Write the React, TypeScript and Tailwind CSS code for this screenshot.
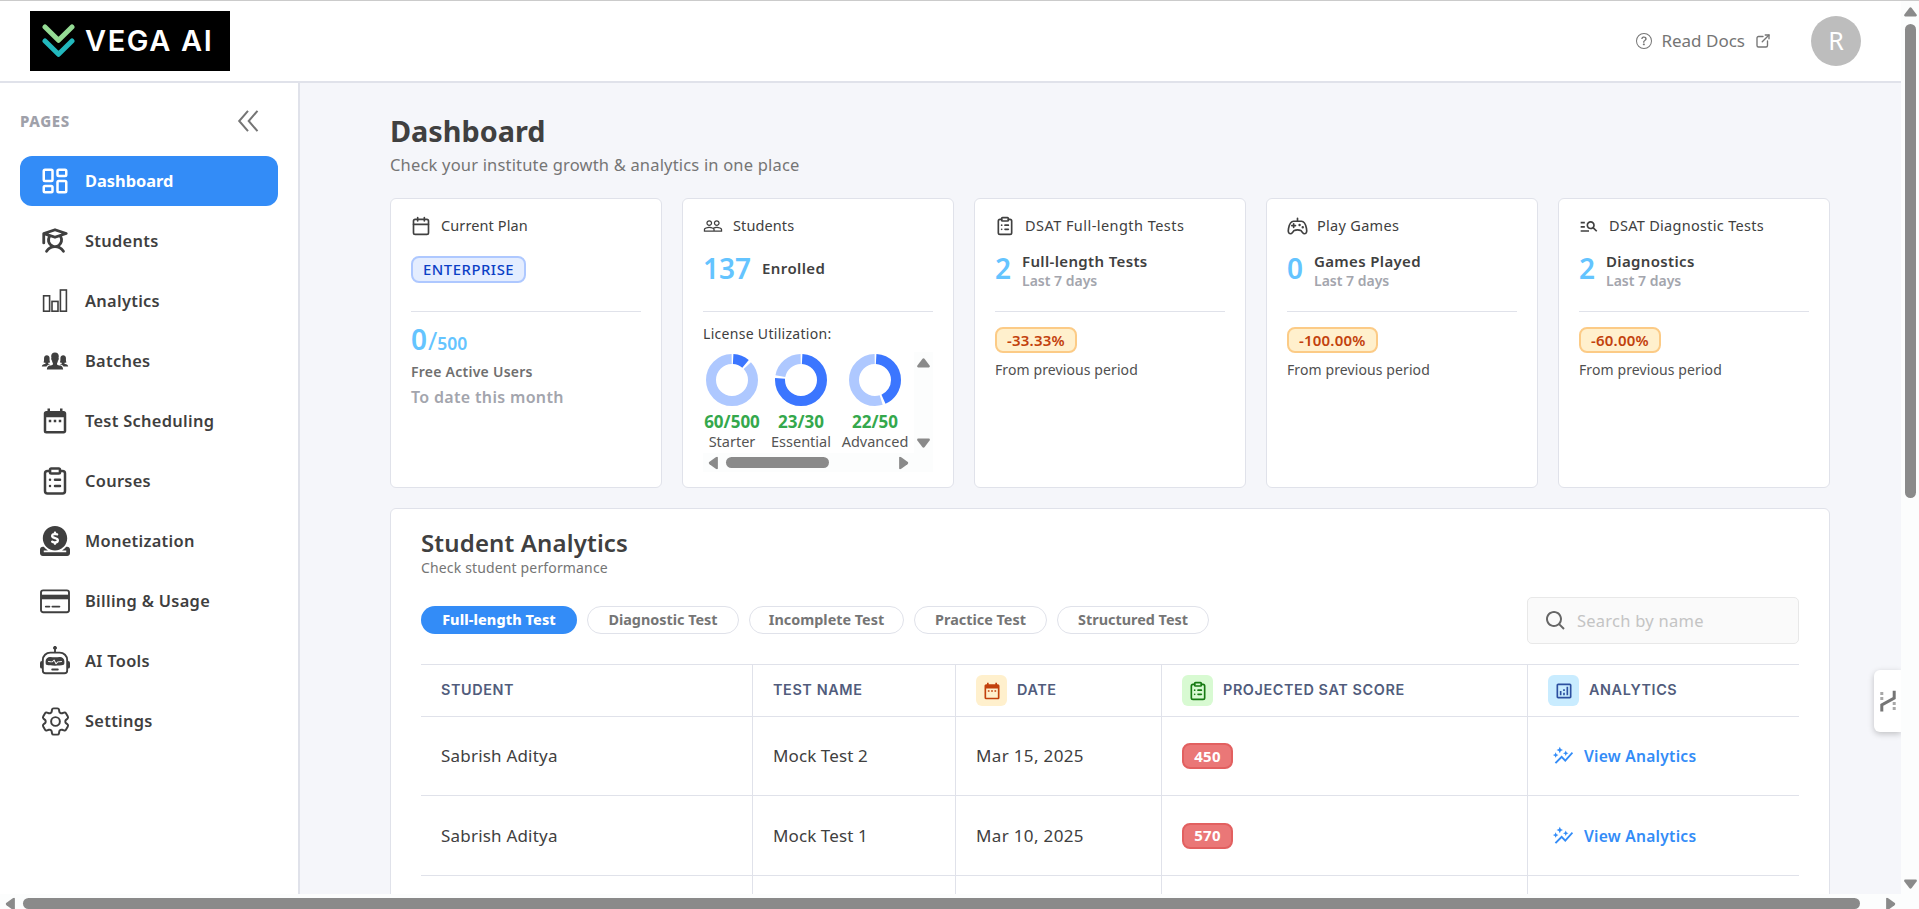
import type { ComponentType, ReactNode } from "react";
import { LuLayoutDashboard, LuClipboardList } from "react-icons/lu";
import { PiStudentBold } from "react-icons/pi";
import { IoIosPeople } from "react-icons/io";
import { FaCircleDollarToSlot } from "react-icons/fa6";
import { BsRobot, BsQuestionCircle } from "react-icons/bs";
import { MdDateRange, MdPeopleOutline, MdManageSearch, MdAutoGraph, MdOutlineAnalytics } from "react-icons/md";
import { HiOutlineCog6Tooth } from "react-icons/hi2";
import { BiSearch } from "react-icons/bi";
import { FiCalendar } from "react-icons/fi";
import { TbExternalLink } from "react-icons/tb";

type Icon = ComponentType<{ size?: number; className?: string }>;

function BarsIcon() {
  return (
    <svg width="30" height="30" viewBox="0 0 30 30" fill="none" stroke="currentColor" strokeWidth="1.6">
      <rect x="3.6" y="9.8" width="6" height="15.4" />
      <rect x="12" y="15.4" width="6" height="9.8" />
      <rect x="20.4" y="4" width="6" height="21.2" />
    </svg>
  );
}

function CardIcon() {
  return (
    <svg width="30" height="30" viewBox="0 0 30 30" fill="none" stroke="currentColor" strokeWidth="1.9">
      <rect x="1" y="4.4" width="28" height="21.8" rx="2.2" />
      <path d="M1 11 H29" strokeWidth="4.6" />
      <path d="M5.8 20.6 H9.4 M12.4 20.6 H19.4" strokeLinecap="round" />
    </svg>
  );
}

function GamepadIcon({ size = 20, className }: { size?: number; className?: string }) {
  return (
    <svg width={size} height={size} viewBox="0 0 24 24" fill="none" stroke="currentColor" strokeWidth="1.9" strokeLinecap="round" strokeLinejoin="round" className={className}>
      <path d="M7.5 6 H16.5 C19.8 6 21.2 9 22.2 14 C23 18 22.2 20.3 20.2 20.3 C18.2 20.3 17.2 17.6 15.6 16.5 C14 15.6 10 15.6 8.4 16.5 C6.8 17.6 5.8 20.3 3.8 20.3 C1.8 20.3 1 18 1.8 14 C2.8 9 4.2 6 7.5 6 Z M12 5.6 V2.6" />
      <path d="M7.6 8.9 V13.1 M5.5 11 H9.7" />
      <path d="M14.4 10.2 V10.3 M18 12.8 V12.9" strokeWidth="2.8" />
    </svg>
  );
}

function Logo() {
  return (
    <div className="flex h-[60px] w-[200px] items-center bg-black pl-3">
      <svg width="34" height="36" viewBox="0 0 34 36" fill="none" strokeWidth="5" strokeLinecap="round" strokeLinejoin="round">
        <path d="M3 18 L16.5 31.3 L30 18" stroke="#22b8bd" />
        <path d="M3 4 L16.5 17.3 L30 4" stroke="#95dc95" />
      </svg>
      <span className="ml-[9px] font-['Inter',sans-serif] text-[29px] leading-[36px] font-semibold tracking-[1.6px] whitespace-nowrap text-white">VEGA AI</span>
    </div>
  );
}

const navItems: { label: string; icon: ReactNode }[] = [
  { label: "Dashboard", icon: <LuLayoutDashboard size={30} /> },
  { label: "Students", icon: <PiStudentBold size={30} /> },
  { label: "Analytics", icon: <BarsIcon /> },
  { label: "Batches", icon: <IoIosPeople size={30} /> },
  { label: "Test Scheduling", icon: <MdDateRange size={30} /> },
  { label: "Courses", icon: <LuClipboardList size={30} /> },
  { label: "Monetization", icon: <FaCircleDollarToSlot size={30} /> },
  { label: "Billing & Usage", icon: <CardIcon /> },
  { label: "AI Tools", icon: <BsRobot size={30} /> },
  { label: "Settings", icon: <HiOutlineCog6Tooth size={35} strokeWidth={1.35} className="shrink-0" /> },
];

function Header() {
  return (
    <header className="flex h-[83px] shrink-0 items-center justify-between border-t border-b-2 border-t-[#cbcbcb] border-b-[#e0e2ea] bg-white pr-10 pl-[30px]">
      <Logo />
      <div className="flex items-center">
        <BsQuestionCircle size={16} className="text-[#757575]" />
        <span className="ml-[9px] text-[17px] leading-6 text-[#757575]">Read Docs</span>
        <TbExternalLink size={18} strokeWidth={1.8} className="ml-[9px] text-[#757575]" />
        <div className="ml-[39px] flex size-[50px] items-center justify-center rounded-full bg-[#bdbdbd] text-[25px] text-white">R</div>
      </div>
    </header>
  );
}

function Sidebar() {
  return (
    <aside className="w-[300px] shrink-0 border-r-2 border-[#e0e2ea] bg-white pl-5">
      <div className="flex h-[73px] items-center justify-between pt-[3px] pr-[39px]">
        <span className="text-[15px] leading-6 font-extrabold tracking-[0.6px] text-[#9fa1aa]">PAGES</span>
        <svg width="22" height="22" viewBox="0 0 22 22" fill="none" stroke="#757575" strokeWidth="2">
          <path d="M11 0.8 L2.2 11 L11 21.2 M20.5 0.8 L11.7 11 L20.5 21.2" />
        </svg>
      </div>
      <nav className="flex w-[258px] flex-col gap-2.5">
        {navItems.map((item, i) => (
          <div
            key={item.label}
            className={
              i === 0
                ? "flex h-[50px] items-center rounded-xl bg-[#338cf7] pl-5 font-bold text-white"
                : "flex h-[50px] items-center rounded-xl pl-5 font-semibold tracking-[0.3px] text-[#3f3f3f]"
            }
          >
            <span className="flex size-[30px] items-center justify-center">{item.icon}</span>
            <span className="ml-[15px] text-[16.4px] leading-6">{item.label}</span>
          </div>
        ))}
      </nav>
    </aside>
  );
}

function Card({ icon: Icon, size, title, tracking, children }: { icon: Icon; size: number; title: string; tracking: string; children: ReactNode }) {
  return (
    <section className="h-[290px] rounded-md border border-[#e0e2ea] bg-white px-5 pt-[15px]">
      <div className="flex h-6 items-center text-[#404040]">
        <span className="flex w-5 justify-center"><Icon size={size} className="shrink-0" /></span>
        <span className={`ml-2.5 pb-px text-[14.5px] leading-[23px] ${tracking}`}>{title}</span>
      </div>
      {children}
    </section>
  );
}

function Divider() {
  return <div className="mt-[22px] h-px bg-[#e0e2ea]" />;
}

function TrendCard({ icon, size, title, tracking, value, label, change }: { icon: Icon; size: number; title: string; tracking: string; value: string; label: string; change: string }) {
  return (
    <Card icon={icon} size={size} title={title} tracking={tracking}>
      <div className="mt-[11px] flex h-10 items-center">
        <span className="w-[27px] pb-[3px] text-[28px] leading-9 font-semibold text-[#64c4ff]">{value}</span>
        <div className="pt-[3px]">
          <div className="text-[15px] leading-[19px] font-semibold tracking-[0.35px] text-[#404040]">{label}</div>
          <div className="text-[14px] leading-[19px] font-semibold text-[#a3a5ad]">Last 7 days</div>
        </div>
      </div>
      <Divider />
      <div className="mt-[15px] flex h-[26px] w-fit items-center rounded-lg border-2 border-[#fccb86] bg-[#fff0cd] px-2.5 text-[15px] leading-5 font-semibold tracking-[0.2px] text-[#c2410c]">{change}</div>
      <div className="mt-[5px] text-[14px] leading-6 tracking-[0.1px] text-[#505050]">From previous period</div>
    </Card>
  );
}

function Donut({ used, total }: { used: number; total: number }) {
  const r = 21;
  const c = 2 * Math.PI * r;
  const gap = 2.4;
  const a = (used / total) * c;
  return (
    <svg width="52" height="52" viewBox="0 0 52 52" fill="none" strokeWidth="10">
      <g transform="rotate(-90 26 26)">
        <circle cx="26" cy="26" r={r} stroke="#3b76ff" strokeDasharray={`${a - gap} ${c - a + gap}`} strokeDashoffset={-gap / 2} />
        <circle cx="26" cy="26" r={r} stroke="#aec8ff" strokeDasharray={`${c - a - gap} ${a + gap}`} strokeDashoffset={-a - gap / 2} />
      </g>
    </svg>
  );
}

function Arrow({ className }: { className: string }) {
  return (
    <svg width="13" height="10" viewBox="0 0 13 10" className={className} fill="#8a8a8a">
      <path d="M5.3 1 Q6.5 -0.6 7.7 1 L12.6 7.6 Q13.4 9.4 11.8 9.4 L1.2 9.4 Q-0.4 9.4 0.4 7.6 Z" />
    </svg>
  );
}

const licenses = [
  { name: "Starter", used: 60, total: 500, cls: "w-[58px]" },
  { name: "Essential", used: 23, total: 30, cls: "w-[60px] ml-[10px]" },
  { name: "Advanced", used: 22, total: 50, cls: "w-[68px] ml-[10px]" },
];

function LicenseCard() {
  return (
    <Card icon={MdPeopleOutline} size={20} title="Students" tracking="tracking-[0.1px]">
      <div className="mt-[11px] flex h-10 items-center">
        <span className="pb-[3px] text-[28px] leading-9 font-semibold text-[#64c4ff]">137</span>
        <span className="ml-[11px] pb-0.5 text-[15px] leading-6 font-semibold tracking-[0.4px] text-[#404040]">Enrolled</span>
      </div>
      <Divider />
      <div className="mt-[10px] text-[14px] leading-6 tracking-[0.3px] text-[#404040]">License Utilization:</div>
      <div className="mt-1.5 h-[120px] w-[230px]">
        <div className="flex h-[101px]">
          <div className="flex w-[211px]">
            {licenses.map((l) => (
              <div key={l.name} className={`flex shrink-0 flex-col items-center pt-0.5 ${l.cls}`}>
                <Donut used={l.used} total={l.total} />
                <div className="mt-1 text-[17px] leading-6 font-bold whitespace-nowrap text-[#34a84c]">{l.used}/{l.total}</div>
                <div className="mt-[-3px] text-[14.5px] leading-5 text-[#555]">{l.name}</div>
              </div>
            ))}
          </div>
          <div className="flex w-[19px] flex-col items-center justify-between bg-[#fcfdfd] pt-1.5 pb-[5px]">
            <Arrow className="" />
            <Arrow className="rotate-180" />
          </div>
        </div>
        <div className="flex h-[19px] items-center bg-[#fcfdfd] pl-1">
          <Arrow className="-rotate-90" />
          <div className="ml-1.5 h-[11px] w-[103px] rounded-full bg-[#8a8a8a]" />
          <Arrow className="ml-[68px] rotate-90" />
        </div>
      </div>
    </Card>
  );
}

function PlanCard() {
  return (
    <Card icon={FiCalendar} size={20} title="Current Plan" tracking="tracking-[0.1px]">
      <div className="mt-[11px] flex h-10 items-center">
        <div className="flex h-[27px] items-center rounded-lg border-2 border-[#aec8ff] bg-[#e4edff] px-2.5 text-[14.8px] font-medium tracking-[0.55px] text-[#0b3fc6]">ENTERPRISE</div>
      </div>
      <Divider />
      <div className="mt-[9px] h-9 leading-9 text-[#64c4ff]">
        <span className="text-[28px] font-semibold">0</span>
        <span className="ml-px text-[25px]">/</span>
        <span className="text-[17.5px] font-semibold">500</span>
      </div>
      <div className="mt-[3px] text-[14px] leading-6 font-semibold tracking-[0.25px] text-[#6f6f6f]">Free Active Users</div>
      <div className="text-[16px] leading-[26px] font-semibold tracking-[0.33px] text-[#a3a5ad]">To date this month</div>
    </Card>
  );
}

const tabs = [
  { label: "Diagnostic Test", cls: "w-[152px]" },
  { label: "Incomplete Test", cls: "w-[155px]" },
  { label: "Practice Test", cls: "w-[133px]" },
  { label: "Structured Test", cls: "w-[152px]" },
];

const cell = "flex items-center border-r border-[#e0e2ea] pl-5 last:border-r-0";
const grid = "grid grid-cols-[332px_203px_206px_366px_1fr] border-b border-[#e0e2ea]";
const head = "font-['Inter',sans-serif] text-[14.4px] leading-5 font-semibold tracking-[0.6px] text-[#515c7c]";

function HeadCell({ icon: Icon, box, label }: { icon: Icon; box: string; label: string }) {
  return (
    <div className={cell}>
      <span className={`flex size-[31px] items-center justify-center rounded-md ${box}`}><Icon size={20} /></span>
      <span className={`ml-2.5 pb-0.5 ${head}`}>{label}</span>
    </div>
  );
}

function Row({ name, test, date, score, height }: { name: string; test: string; date: string; score: number; height: string }) {
  return (
    <div className={`${grid} ${height} text-[17px] leading-6 text-[#404040]`}>
      <div className={`${cell} tracking-[0.2px]`}>{name}</div>
      <div className={`${cell} tracking-[0.1px]`}>{test}</div>
      <div className={`${cell} tracking-[0.35px]`}>{date}</div>
      <div className={cell}>
        <span className="flex h-[26px] w-[51px] items-center justify-center rounded-lg border-2 border-[#e26060] bg-[#ea7777] pb-px text-[15px] font-bold tracking-[0.3px] text-white">{score}</span>
      </div>
      <div className={`${cell} text-[#338cf7]`}>
        <MdAutoGraph size={22} className="ml-1" />
        <span className="ml-2.5 text-[15.6px] font-semibold tracking-[0.25px]">View Analytics</span>
      </div>
    </div>
  );
}

function StudentAnalytics() {
  return (
    <section className="mt-5 h-[600px] rounded-md border border-[#e0e2ea] bg-white px-[30px] pt-[18px]">
      <h2 className="text-[24px] leading-8 font-semibold tracking-[0.15px] text-[#404040]">Student Analytics</h2>
      <p className="text-[14px] leading-[18px] tracking-[0.15px] text-[#757575]">Check student performance</p>
      <div className="mt-5 flex h-[47px] items-center justify-between">
        <div className="flex gap-2.5 pb-px text-[14.4px] leading-5">
          <div className="flex h-7 w-[156px] items-center justify-center rounded-full bg-[#338cf7] font-extrabold tracking-[0.1px] text-white">Full-length Test</div>
          {tabs.map((t) => (
            <div key={t.label} className={`flex h-7 items-center justify-center rounded-full border border-[#e0e2ea] font-bold whitespace-nowrap text-[#757575] ${t.cls}`}>{t.label}</div>
          ))}
        </div>
        <div className="flex h-[47px] w-[272px] items-center rounded-[5px] border border-[#e8e8e8] bg-[#fafafa] pl-4">
          <BiSearch size={24} className="text-[#666]" />
          <span className="ml-[9px] text-[16.5px] leading-6 tracking-[0.25px] text-[#c4c4c4]">Search by name</span>
        </div>
      </div>
      <div className="mt-5">
        <div className={`${grid} h-[53px] border-t`}>
          <div className={`${cell} pb-0.5 ${head}`}>STUDENT</div>
          <div className={`${cell} pb-0.5 ${head}`}>TEST NAME</div>
          <HeadCell icon={MdDateRange} box="bg-[#fff0cd] text-[#c2410c]" label="DATE" />
          <HeadCell icon={LuClipboardList} box="bg-[#d8fad2] text-[#167a12]" label="PROJECTED SAT SCORE" />
          <HeadCell icon={MdOutlineAnalytics} box="bg-[#c9ecff] text-[#2c4fa0]" label="ANALYTICS" />
        </div>
        <Row name="Sabrish Aditya" test="Mock Test 2" date="Mar 15, 2025" score={450} height="h-[79px]" />
        <Row name="Sabrish Aditya" test="Mock Test 1" date="Mar 10, 2025" score={570} height="h-[80px]" />
        <div className={`${grid} h-20`}>
          <div className={cell} />
          <div className={cell} />
          <div className={cell} />
          <div className={cell} />
          <div className={cell} />
        </div>
      </div>
    </section>
  );
}

function SideTab() {
  return (
    <div className="absolute top-[670px] right-0 flex h-[62px] w-[27px] items-center justify-center rounded-l-md bg-white shadow-[0_2px_6px_rgba(0,0,0,0.22)]">
      <svg width="16" height="22" viewBox="0 0 16 22" fill="none" strokeWidth="3">
        <path d="M1.8 21.5 V15 L14.2 8 V0.8" stroke="#757575" />
        <path d="M1.8 2 V10 M14.2 12 V21" stroke="#a8a8a8" strokeDasharray="3 2" />
      </svg>
    </div>
  );
}

export default function App() {
  return (
    <div className="flex h-[909px] w-[1919px] flex-col overflow-hidden bg-[#fcfdfd] font-['Noto_Sans',sans-serif]">
      <div className="flex h-[894px] shrink-0">
        <div className="relative flex w-[1901px] flex-col overflow-hidden">
          <Header />
          <div className="flex min-h-0 flex-1">
            <Sidebar />
            <main className="flex-1 overflow-hidden bg-[#f5f6fa] pt-7 pr-[71px] pl-[90px]">
              <h1 className="text-[28.8px] leading-10 font-bold text-[#404040]">Dashboard</h1>
              <p className="text-[16.5px] leading-7 tracking-[0.18px] text-[#757575]">Check your institute growth &amp; analytics in one place</p>
              <div className="mt-[19px] grid grid-cols-5 gap-5">
                <PlanCard />
                <LicenseCard />
                <TrendCard icon={LuClipboardList} size={20} title="DSAT Full-length Tests" tracking="tracking-[0.45px]" value="2" label="Full-length Tests" change="-33.33%" />
                <TrendCard icon={GamepadIcon} size={21} title="Play Games" tracking="tracking-[0.3px]" value="0" label="Games Played" change="-100.00%" />
                <TrendCard icon={MdManageSearch} size={20} title="DSAT Diagnostic Tests" tracking="tracking-[0.3px]" value="2" label="Diagnostics" change="-60.00%" />
              </div>
              <StudentAnalytics />
            </main>
          </div>
          <SideTab />
        </div>
        <div className="flex w-[18px] flex-col items-center border-t border-[#cbcbcb] pt-1.5 pb-[5px] pl-px">
          <Arrow className="" />
          <div className="mt-[7px] h-[474px] w-[11px] rounded-full bg-[#8a8a8a]" />
          <Arrow className="mt-auto rotate-180" />
        </div>
      </div>
      <div className="flex h-[15px] items-center pt-1 pl-1">
        <Arrow className="-rotate-90" />
        <div className="ml-1.5 h-[11px] w-[1837px] rounded-full bg-[#8a8a8a]" />
        <Arrow className="ml-6 rotate-90" />
      </div>
    </div>
  );
}
